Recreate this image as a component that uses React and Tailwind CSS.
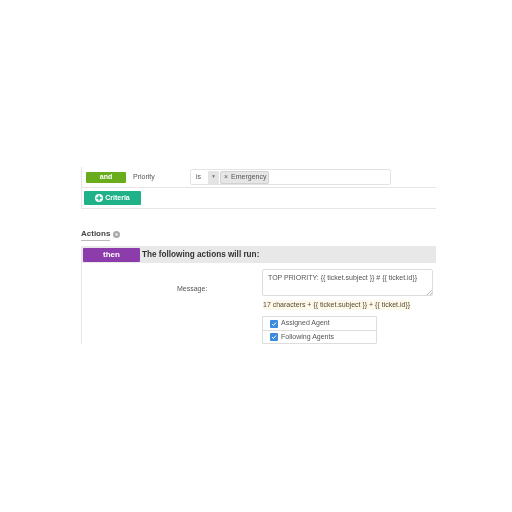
export default function App() {
  return (
    <div className="w-[512px] h-[512px] bg-white overflow-hidden pt-[167px] pl-[81px] [font-family:'Liberation_Sans',sans-serif] text-[#555] blur-[0.5px]">
      <div className="w-[355px] h-[177px] overflow-hidden">
        <div className="border-l border-b border-[#e6e6e6]">
          <div className="h-[21px] flex items-center border-b border-[#e6e6e6] pl-1">
            <div className="w-10 h-[11px] bg-[#6aad1c] rounded-[1px] text-white text-[7px] font-bold flex items-center justify-center">and</div>
            <div className="ml-[7px] w-[57px] text-[7px]">Priority</div>
            <div className="w-[201px] h-[16px] border border-[#e3e3e3] rounded-[2px] flex items-center p-[1px]">
              <div className="w-4 pl-1 text-[7px]">is</div>
              <div className="w-[11px] h-[13px] bg-[#e4e4e4] flex items-center justify-center text-[5px] text-[#777]">▼</div>
              <div className="ml-[1px] w-[49px] h-[13px] bg-[#e6e6e6] border border-[#d2d2d2] rounded-[2px] text-[7px] flex items-center pl-[3px] gap-[3px] whitespace-nowrap"><span>×</span><span>Emergency</span></div>
            </div>
          </div>
          <div className="h-[20px] flex items-center pl-[2px]">
            <div className="w-[57px] h-[14px] bg-[#1fb288] rounded-[1px] text-white text-[7px] font-bold flex items-center justify-center gap-[2px]">
              <svg width="8" height="8" viewBox="0 0 8 8"><circle cx="4" cy="4" r="4" fill="#fff"/><path d="M4 1.5v5M1.5 4h5" stroke="#1fb288" strokeWidth="1.4"/></svg>
              Criteria
            </div>
          </div>
        </div>
        <div className="mt-[19px] flex items-center gap-[3px] h-[12px]">
          <span className="text-[8px] font-bold text-[#444] border-b border-[#bbb] leading-[12px]">Actions</span>
          <svg width="7" height="7" viewBox="0 0 7 7"><circle cx="3.5" cy="3.5" r="3.5" fill="#aaa"/><circle cx="3.5" cy="3.5" r="1.2" fill="#eee"/></svg>
        </div>
        <div className="mt-[6px] border-l border-[#e6e6e6]">
          <div className="h-[17px] bg-[#e8e8e8] flex items-center pl-[1px]">
            <div className="w-[57px] h-[14px] bg-[#8d3cab] rounded-[1px] text-white text-[8px] font-bold flex items-center justify-center">then</div>
            <div className="ml-[2px] pt-[1px] text-[8.2px] font-bold text-[#333]">The following actions will run:</div>
          </div>
          <div className="flex pt-[6px]">
            <div className="w-[180px] pt-[15px] pl-[95px] text-[7px] whitespace-nowrap">Message:</div>
            <div className="flex flex-col">
              <div className="w-[171px] h-[27px] border border-[#ddd] rounded-[2px] relative text-[7px] pl-[5px] pt-[3px] whitespace-nowrap">
                TOP PRIORITY: {"{{ ticket.subject }} # {{ ticket.id}}"}
                <svg className="absolute right-0 bottom-0" width="5" height="5" viewBox="0 0 5 5"><path d="M0 5L5 0M3 5L5 3" stroke="#999" strokeWidth="0.7"/></svg>
              </div>
              <div className="mt-[4px] ml-[1px] text-[7px] text-[#5a4a2a] bg-[#fdf8ec] h-[10px] leading-[10px] w-fit whitespace-nowrap">{"17 characters + {{ ticket.subject }} + {{ ticket.id}}"}</div>
              <div className="mt-[6px] w-[115px] border border-[#ddd] rounded-[1px]">
                {["Assigned Agent", "Following Agents"].map((t, i) => (
                  <div key={t} className={`h-[13px] flex items-center pl-[7px] gap-[3px] text-[7px] ${i ? "border-t border-[#ddd]" : ""}`}>
                    <span className="w-[8px] h-[8px] bg-[#3b8be0] rounded-[1px] flex items-center justify-center">
                      <svg width="6" height="6" viewBox="0 0 6 6"><path d="M1 3l1.5 1.5L5 1.5" stroke="#fff" strokeWidth="1" fill="none"/></svg>
                    </span>
                    {t}
                  </div>
                ))}
              </div>
            </div>
          </div>
        </div>
      </div>
    </div>
  );
}
